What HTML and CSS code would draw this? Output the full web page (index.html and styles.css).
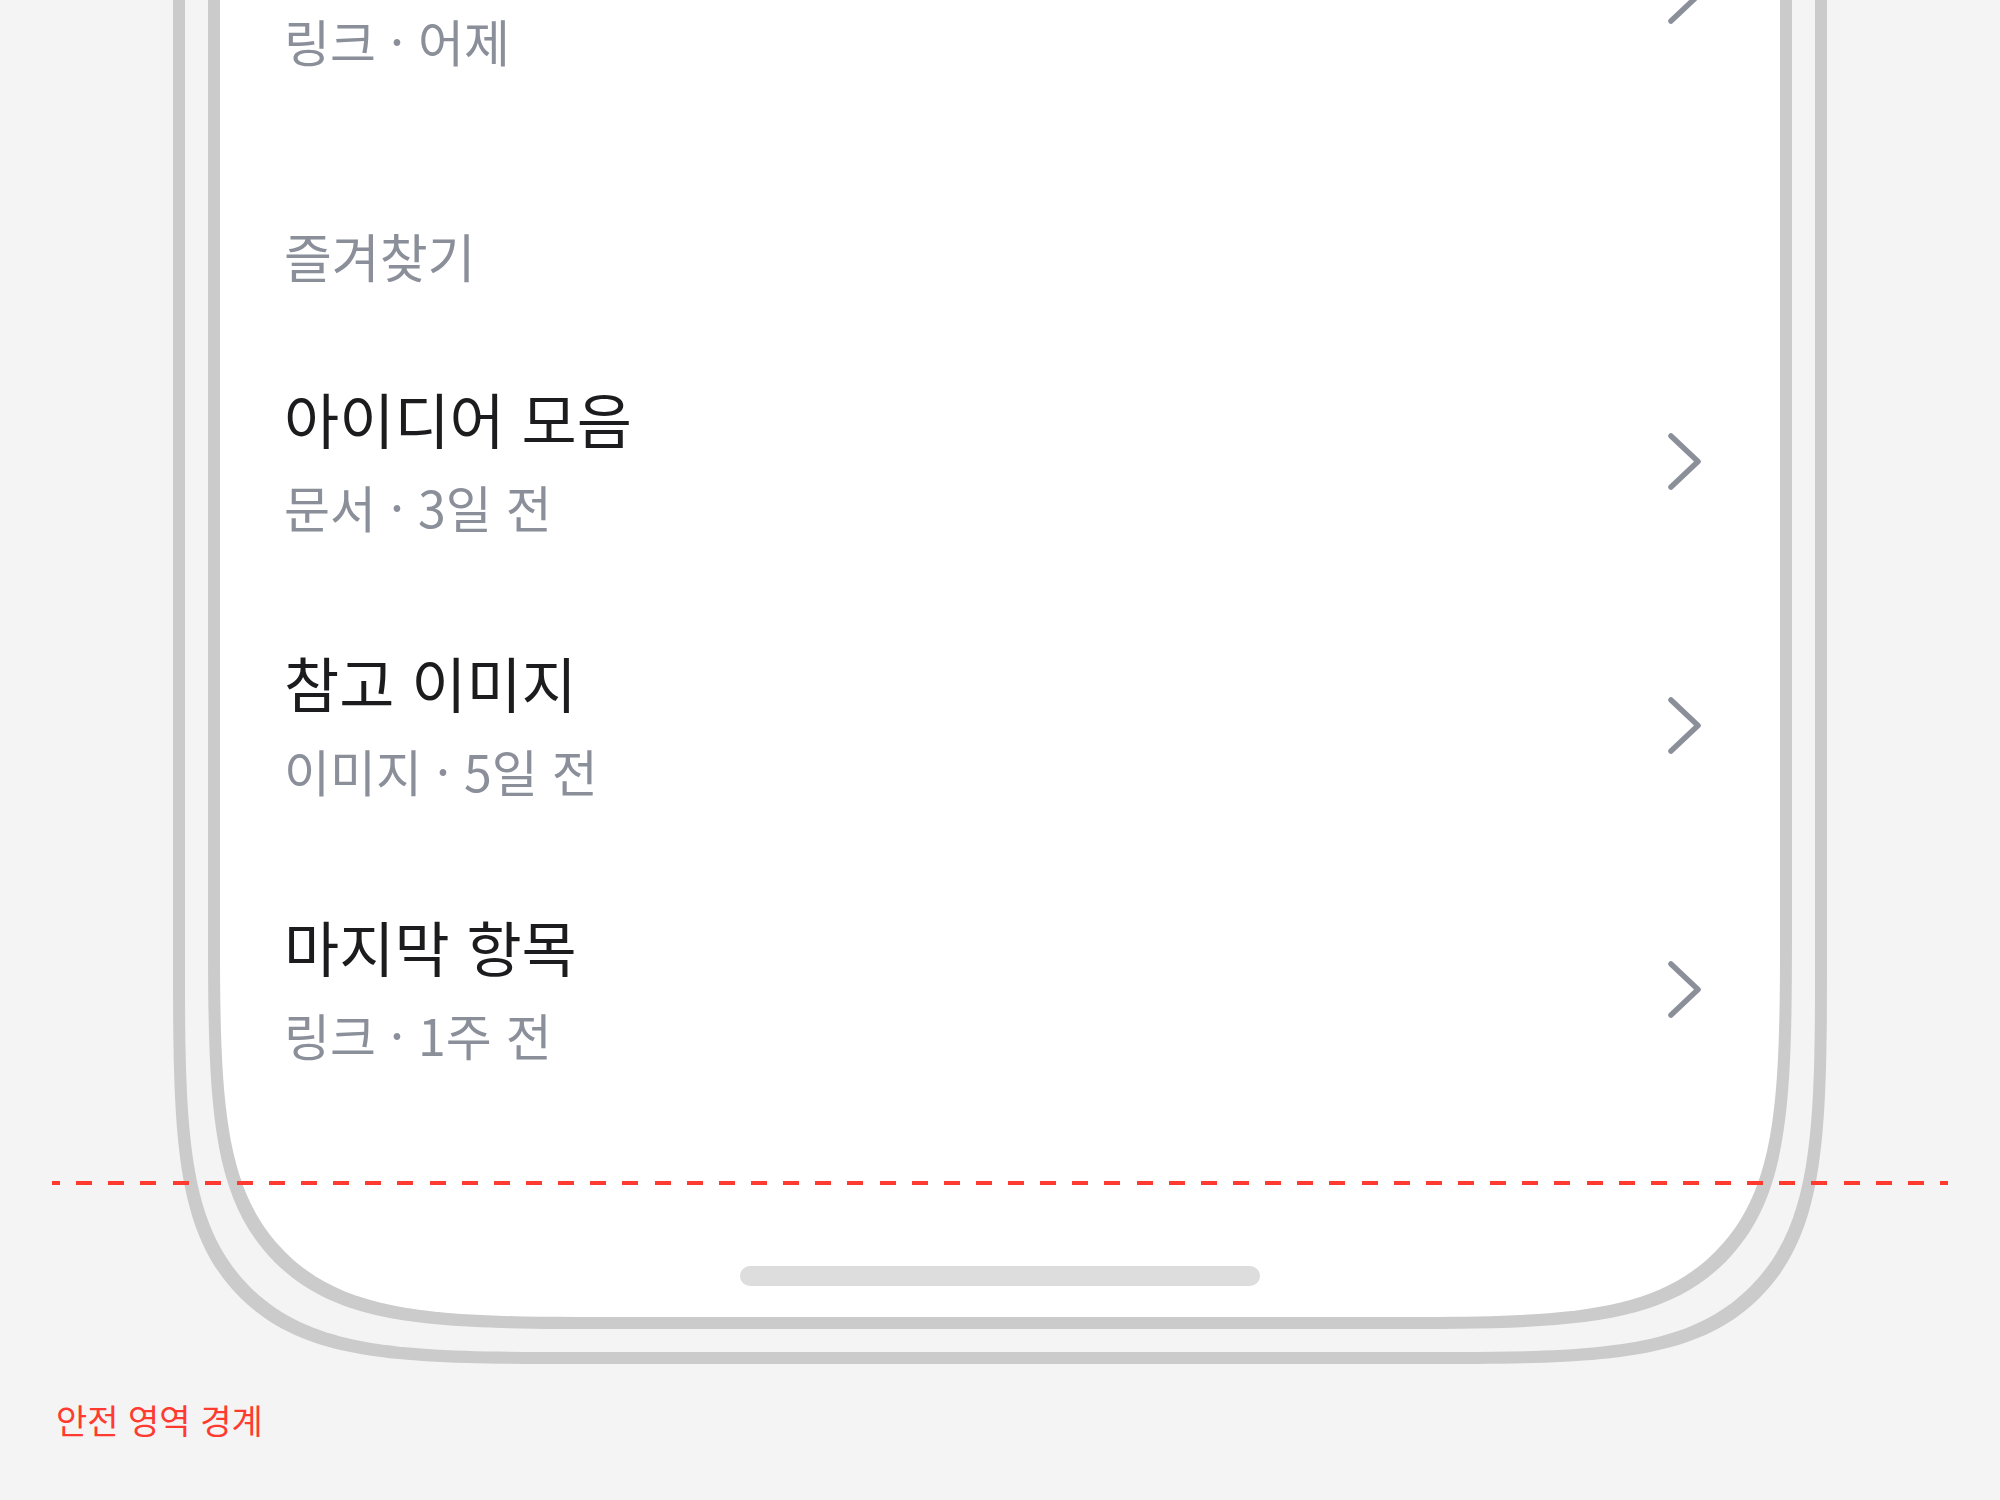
FILE: index.html
```html
<!DOCTYPE html>
<html lang="ko">
<head>
    <meta charset="UTF-8">
    <meta name="viewport" content="width=device-width, initial-scale=1.0">
    <title>보관함 - 안전 영역 미리보기</title>
    <link rel="stylesheet" href="styles.css">
</head>
<body>
    <div class="stage">
        <div class="device">
            <div class="screen">
                <section class="group">
                    <h2 class="group-title">최근 항목</h2>
                    <ul class="list">
                        <li class="row">
                            <div class="row-text">
                                <p class="row-title">회의록 정리</p>
                                <p class="row-meta">문서 · 오늘</p>
                            </div>
                            <svg class="chevron" viewBox="0 0 48 64"><path d="M3 7 30 32.5 3 58"/></svg>
                        </li>
                        <li class="row">
                            <div class="row-text">
                                <p class="row-title">디자인 레퍼런스</p>
                                <p class="row-meta">링크 · 어제</p>
                            </div>
                            <svg class="chevron" viewBox="0 0 48 64"><path d="M3 7 30 32.5 3 58"/></svg>
                        </li>
                    </ul>
                </section>

                <section class="group">
                    <h2 class="group-title">즐겨찾기</h2>
                    <ul class="list">
                        <li class="row">
                            <div class="row-text">
                                <p class="row-title">아이디어 모음</p>
                                <p class="row-meta">문서 · 3일 전</p>
                            </div>
                            <svg class="chevron" viewBox="0 0 48 64"><path d="M3 7 30 32.5 3 58"/></svg>
                        </li>
                        <li class="row">
                            <div class="row-text">
                                <p class="row-title">참고 이미지</p>
                                <p class="row-meta">이미지 · 5일 전</p>
                            </div>
                            <svg class="chevron" viewBox="0 0 48 64"><path d="M3 7 30 32.5 3 58"/></svg>
                        </li>
                        <li class="row">
                            <div class="row-text">
                                <p class="row-title">마지막 항목</p>
                                <p class="row-meta">링크 · 1주 전</p>
                            </div>
                            <svg class="chevron" viewBox="0 0 48 64"><path d="M3 7 30 32.5 3 58"/></svg>
                        </li>
                    </ul>
                </section>

                <div class="home-indicator"></div>
            </div>
        </div>

        <p class="safe-label">안전 영역 경계</p>
        <div class="safe-line"></div>
    </div>
</body>
</html>
```

FILE: styles.css
```css
* {
    box-sizing: border-box;
}
body {
    margin: 0;
    background: #f4f4f4;
    font-family: "Noto Sans CJK KR", "Noto Sans", sans-serif;
}
.stage {
    position: relative;
    height: 1500px;
    overflow: hidden;
}
.device {
    width: 1654px;
    margin: -627px auto 0;
    padding: 0 23px 23px;
    border: 12px solid #cbcbcb;
    border-radius: 240px;
}
.screen {
    background: #fff;
    border: 12px solid #cbcbcb;
    border-radius: 240px;
    overflow: hidden;
}
/* smooth phone corners where the browser can draw them */
@supports (corner-shape: squircle) {
    .device,
    .screen {
        border-radius: 420px;
        corner-shape: squircle;
    }
}
.group-title {
    margin: 0;
    padding: 96px 64px 40px;
    font-size: 52px;
    line-height: 66px;
    font-weight: 400;
    color: #8a8f99;
}
.list {
    list-style: none;
    margin: 0;
    padding: 0;
}
.row {
    display: flex;
    align-items: center;
    justify-content: space-between;
    height: 264px;
    padding: 0 64px;
}
.row-text {
    margin-bottom: 6px;
}
.row-title {
    margin: 0;
    font-size: 60px;
    line-height: 80px;
    color: #1c1c1e;
}
.row-meta {
    margin: 16px 0 0;
    font-size: 50px;
    line-height: 64px;
    color: #8a8f99;
}
.chevron {
    flex: none;
    width: 48px;
    height: 64px;
    fill: none;
    stroke: #8a8f99;
    stroke-width: 5.5;
    stroke-linecap: round;
    stroke-linejoin: round;
}
.home-indicator {
    width: 520px;
    height: 20px;
    margin: 145px auto 31px;
    border-radius: 10px;
    background: #dddddd;
}
.safe-label {
    margin: 36px 0 0 56px;
    font-size: 34px;
    line-height: 40px;
    color: #ff3b30;
}
.safe-line {
    position: absolute;
    left: 52px;
    right: 52px;
    top: 1181px;
    height: 4px;
    background: repeating-linear-gradient(to right, #ff3b30 0 8px, transparent 8px 24.136px, #ff3b30 24.136px 32.136px);
}
```
